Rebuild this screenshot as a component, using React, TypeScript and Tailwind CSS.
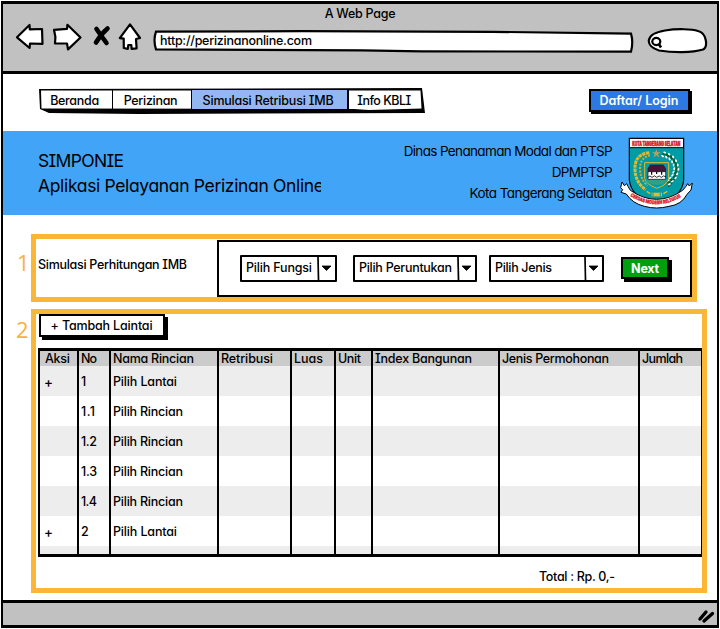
import { useLayoutEffect, useRef, useState } from "react";

const FONT = "font-['Inter','Noto_Sans',sans-serif]";
const FEATURES = "[font-feature-settings:'cv11','cv08','calt'_0]";

/* Single-line label that tracks its letters so the run fills `width` pixels. */
function Label({ text, width, className = "" }: { text: string; width: number; className?: string }) {
  const ref = useRef<HTMLSpanElement>(null);
  const [spacing, setSpacing] = useState(0);
  useLayoutEffect(() => {
    if (ref.current && text.length > 1) {
      const natural = ref.current.getBoundingClientRect().width - spacing * text.length;
      setSpacing((width - natural) / (text.length - 1));
    }
  }, [text, width]);
  return (
    <span ref={ref} className={`inline-block whitespace-pre ${className}`} style={{ letterSpacing: `${spacing}px` }}>
      {text}
    </span>
  );
}

function BrowserIcons() {
  return (
    <svg className="ml-3 mt-4 h-[36px] w-[134px] shrink-0" viewBox="15 20 134 36" fill="white" stroke="black" strokeWidth="2.2" strokeLinejoin="round">
      <path d="M17 37.3 L29.5 25 L29.8 29.3 L42 29 L42.5 43.8 L30 43.5 L29.6 48 Z" />
      <path d="M54 29.8 L67 28.8 L67.4 24.8 L80.5 37.5 L68 49.4 L67 43.5 L55 43.5 L55.4 37 Z" />
      <path d="M96.5 29 Q100 34 106.5 43 M107.5 28.5 Q101 34 96 42.5" fill="none" strokeWidth="4.6" strokeLinecap="round" />
      <path d="M130 24.3 L140 38 L136 39 L136.6 48.4 L131.6 48.9 L131.3 45 L128.3 45 L127.8 48.9 L123.8 48 L123.7 38.6 L119.8 38.2 Z" />
    </svg>
  );
}

function AddressBar() {
  return (
    <div className="relative ml-[3px] mt-[25px] h-[25px] w-[482px] shrink-0">
      <svg className="absolute inset-0 h-full w-full" viewBox="0 0 482 25" fill="white" stroke="black" strokeWidth="2.2">
        <path d="M4 2.6 L150 2.2 L340 2.8 L479 4.6 Q481.5 13 479 22.6 L270 22.4 L210 21.4 L4 20.4 Q1 11 4 2.6 Z" />
      </svg>
      <span className="absolute left-[8px] top-1 text-[12.5px] leading-4">
        <Label text="http://perizinanonline.com" width={152} />
      </span>
    </div>
  );
}

function SearchPill() {
  return (
    <svg className="ml-[13px] mt-[23px] h-[28px] w-[61px] shrink-0" viewBox="647 27 61 28" fill="white" stroke="black" strokeWidth="2.2">
      <path d="M665 30.5 C677 28.5 692 29 698 31 C707 33 708 47 703 49.5 C692 53 672 52.5 659 50.5 C645 46 644 34 665 30.5 Z" />
      <ellipse cx="656.3" cy="41.5" rx="4" ry="3.6" />
      <path d="M658.5 43.5 L661 47.5" strokeWidth="2.6" />
    </svg>
  );
}

const tabs = [
  { text: "Beranda", width: 49, box: "w-[72px]", active: false },
  { text: "Perizinan", width: 54, box: "w-[79px] border-l-[1.5px]", active: false },
  { text: "Simulasi Retribusi IMB", width: 131, box: "w-[156px] border-l-[1.5px]", active: true },
  { text: "Info KBLI", width: 54, box: "w-[75px] border-l-2", active: false },
];

function NavTabs() {
  return (
    <div className="relative flex h-[26px] w-[386px] pt-px">
      <svg className="absolute inset-0 h-full w-full" viewBox="0 0 386 26">
        <path d="M0 1 L383 0 L386 25 L100 26 L10 25 L1 21 Z" fill="black" />
        <path d="M2 2.4 L381.5 2.4 L382.5 20.5 L330 22 L315 21 L2.5 20.5 Z" fill="white" />
      </svg>
      <div className="relative flex pl-px pt-px">
        {tabs.map((t) => (
          <div key={t.text} className={`flex h-[19px] items-center justify-center border-black pr-[3px] pt-[2px] ${t.box} ${t.active ? "bg-[#93b8f1]" : ""}`}>
            <Label text={t.text} width={t.width} className="leading-4" />
          </div>
        ))}
      </div>
    </div>
  );
}

function Emblem() {
  const leaves = [
    [191, 88, 30], [203, 92, 45], [214, 99, 60], [222, 109, 75], [227, 120, 90], [229, 132, 100],
    [226, 144, 115], [222, 155, 130], [214, 164, 145], [206, 172, 160],
  ];
  return (
    <svg className="ml-[6px] mt-[6px] h-[73px] w-[76px]" viewBox="57 36 228 219">
      <path d="M88 40 H251 V165 Q247 218 169 242 Q93 217 88 165 Z" fill="#009ca6" stroke="black" strokeWidth="3.5" />
      <path d="M90 42 H249 V68 H90 Z" fill="white" />
      <path d="M88 68 H251" stroke="black" strokeWidth="3" />
      <text x="97" y="62" fontSize="17" fontWeight="900" fill="#d71920" stroke="#d71920" strokeWidth="1.4" textLength="144" lengthAdjust="spacingAndGlyphs">KOTA TANGERANG SELATAN</text>
      <path d="M169 73 L172 82 L182 82 L174 88 L178 98 L169 91 L160 98 L164 88 L156 82 L166 82 Z" fill="#c59b54" />
      <path d="M148 83 Q103 88 105 133 Q106 172 137 194" fill="none" stroke="#e6b729" strokeWidth="9" strokeDasharray="10 2" />
      <path d="M150 91 Q119 98 120 133 Q121 162 142 182" fill="none" stroke="#d9a928" strokeWidth="6" strokeDasharray="6 4" />
      <path d="M190 86 Q228 91 230 132 Q230 161 205 185" fill="none" stroke="#075f35" strokeWidth="5" />
      {leaves.map(([x, y, r]) => (
        <g key={`${x}-${y}`} transform={`translate(${x} ${y}) rotate(${r})`}>
          <ellipse cx="0" cy="-6" rx="4.5" ry="3" fill="white" />
          <ellipse cx="0" cy="6" rx="4.5" ry="3" fill="white" />
          <rect x="-4" y="-3" width="8" height="6" fill="#075f35" />
        </g>
      ))}
      <path d="M134 113 H206 V160 Q202 180 170 190 Q138 178 134 160 Z" fill="#009ca6" stroke="#e6b729" strokeWidth="3" />
      <path d="M136 163 L204 163 L200 172 Q170 188 140 172 Z" fill="#2fa08a" />
      <path d="M150 120 H190 L197 131 V140 H144 V131 Z" fill="#4a1539" stroke="#2a0a20" strokeWidth="2" />
      <path d="M144 140 H197 V163 H144 Z" fill="white" stroke="black" strokeWidth="2" />
      <path d="M155 140 V149 M170 140 V147 M185 140 V149" stroke="black" strokeWidth="3.5" />
      <path d="M143 157 Q150 149 156 157 Q164 148 170 157 Q178 149 184 157 Q191 149 198 156" fill="none" stroke="black" strokeWidth="2.4" />
      <path d="M155 203 H186 V214 H155 Z" fill="#e6b729" />
      <path d="M159 203 V214 M181 203 V214" stroke="#009ca6" strokeWidth="3" />
      <path d="M140 199 L151 206 M190 206 L202 199" stroke="#e6b729" strokeWidth="4" />
      <path d="M66 171 L73 182 L80 176 L84 184 L91 196 Q170 250 248 196 L258 184 L263 176 L268 183 L277 174 L273 195 L261 208 Q245 239 207 244 Q169 254 133 244 Q97 235 79 207 L63 202 L68 194 L62 188 Z" fill="white" stroke="black" strokeWidth="3" />
      <path id="emblem-ribbon" d="M90 213 Q170 262 249 213" fill="none" />
      <text fontSize="15" fontWeight="900" fill="#d71920" stroke="#d71920" strokeWidth="0.8">
        <textPath href="#emblem-ribbon" textLength="162" lengthAdjust="spacingAndGlyphs">CERDAS MODERN RELIGIUS</textPath>
      </text>
    </svg>
  );
}

function Banner() {
  return (
    <section className="mt-[17px] flex h-[84px] bg-[#42a4f7] font-normal">
      <div className="w-[318px] overflow-hidden pl-[35px] pt-[17px] text-[17.5px] leading-[25px]">
        <div><Label text="SIMPONIE" width={86} /></div>
        <div><Label text="Aplikasi Pelayanan Perizinan Online" width={286} /></div>
      </div>
      <div className="flex w-[292px] flex-col items-end pr-px pt-[10px] text-[13.5px] leading-[21px]">
        <Label text="Dinas Penanaman Modal dan PTSP" width={209} />
        <Label text="DPMPTSP" width={61} />
        <Label text="Kota Tangerang Selatan" width={143} />
      </div>
      <Emblem />
    </section>
  );
}

function Combo({ text, width, box }: { text: string; width: number; box: string }) {
  return (
    <div className={`flex h-[27px] rounded-[1px] border-2 border-black ${box}`}>
      <div className="min-w-0 grow pl-1 pt-[2px]">
        <Label text={text} width={width} className="leading-4" />
      </div>
      <svg className="h-[23px] w-[18px] shrink-0" viewBox="0 0 18 23">
        <path d="M1 0 L1.5 23" stroke="black" strokeWidth="1.7" />
        <path d="M5 9 H14 L9.5 13.5 Z" stroke="black" strokeWidth="0.8" />
      </svg>
    </div>
  );
}

const columns = [
  { text: "Aksi", width: 25, box: "w-[38px] pl-[5px]" },
  { text: "No", width: 16, box: "w-[32px] pl-[3px]" },
  { text: "Nama Rincian", width: 81, box: "w-[108px] pl-[3px]" },
  { text: "Retribusi", width: 52, box: "w-[73px] pl-[3px]" },
  { text: "Luas", width: 29, box: "w-[44px] pl-[3px]" },
  { text: "Unit", width: 23, box: "w-[37px] pl-[3px]" },
  { text: "Index Bangunan", width: 97, box: "w-[127px] pl-[3px]" },
  { text: "Jenis Permohonan", width: 107, box: "w-[140px] pl-[3px]" },
  { text: "Jumlah", width: 41, box: "w-[62px] pl-[3px]" },
];

const rows = [
  { mark: "+", no: "1", noWidth: 6, name: "Pilih Lantai", nameWidth: 64 },
  { mark: "", no: "1.1", noWidth: 14, name: "Pilih Rincian", nameWidth: 70 },
  { mark: "", no: "1.2", noWidth: 16, name: "Pilih Rincian", nameWidth: 70 },
  { mark: "", no: "1.3", noWidth: 16, name: "Pilih Rincian", nameWidth: 70 },
  { mark: "", no: "1.4", noWidth: 16, name: "Pilih Rincian", nameWidth: 70 },
  { mark: "+", no: "2", noWidth: 7, name: "Pilih Lantai", nameWidth: 64 },
];

function DetailTable() {
  return (
    <div className="relative ml-[2px] h-[209px] w-[664px] border-2 border-t-[3px] border-b-[3px] border-black border-r-[1px]">
      <div className="flex h-[15px] bg-[#cbcbcb] leading-4">
        {columns.map((c) => (
          <div key={c.text} className={`shrink-0 ${c.box}`}><Label text={c.text} width={c.width} /></div>
        ))}
      </div>
      {rows.map((r, i) => (
        <div key={i} className={`flex h-[30px] items-center pt-[2px] ${i % 2 === 0 ? "bg-[#ededed]" : "bg-white"}`}>
          <div className="w-[38px] pl-1 text-[13.5px] leading-4">{r.mark}</div>
          <div className="w-[32px] pl-[3px]"><Label text={r.no} width={r.noWidth} /></div>
          <div className="w-[108px] pl-[3px]"><Label text={r.name} width={r.nameWidth} /></div>
        </div>
      ))}
      <div className="h-[8px] bg-[#ededed]" />
      {/* Continuous column rules drawn over the striped rows */}
      <div className="pointer-events-none absolute inset-0 flex">
        {columns.slice(0, -1).map((c) => (
          <div key={c.text} className={`relative shrink-0 ${c.box}`}>
            <div className="absolute inset-y-0 right-0 w-[2px] translate-x-px bg-black" />
          </div>
        ))}
      </div>
    </div>
  );
}

export default function App() {
  return (
    <div className={`h-[629px] w-[720px] overflow-hidden bg-white pt-px pl-px text-[12.5px] font-[450] text-black ${FONT} ${FEATURES}`}>
      <div className="flex h-[627px] w-[718px] flex-col border-x-2 border-t-[3px] border-b-[3px] border-black">
        <header className="h-[70px] shrink-0 border-b-[3px] border-black bg-[#c1c1c1]">
          <div className="h-0 text-center leading-5"><Label text="A Web Page" width={71} /></div>
          <div className="flex items-start">
            <BrowserIcons />
            <AddressBar />
            <SearchPill />
          </div>
        </header>

        <main className="flex h-[526px] shrink-0 flex-col">
          <div className="flex pl-9 pt-[14px]">
            <NavTabs />
            <div className="ml-[164px] mt-px h-[23px] w-[101px] border-2 border-black bg-[#2c78e4] pr-px text-center font-semibold leading-[20px] text-white shadow-[2px_2px_0_black]">
              <Label text="Daftar/ Login" width={79} />
            </div>
          </div>
          <Banner />

          <div className="mt-[19px] flex">
            <div className="w-7 pl-[14px] pt-[14px] font-['Open_Sans',sans-serif] text-[22px] font-normal leading-[28px] text-[#fbb040]">1</div>
            <section className="flex h-[68px] w-[666px] border-[5px] border-[#fbb636]">
              <div className="w-[181px] pl-[2px] pt-[17px]"><Label text="Simulasi Perhitungan IMB" width={149} /></div>
              <div className="mt-px flex h-[57px] w-[475px] border-2 border-black pl-[21px] pt-[13px]">
                <Combo text="Pilih Fungsi" width={66} box="w-[97px]" />
                <Combo text="Pilih Peruntukan" width={93} box="ml-4 w-[124px]" />
                <Combo text="Pilih Jenis" width={57} box="ml-3 w-[115px]" />
                <div className="ml-[17px] mt-[2px] h-[22px] w-[48px] border-2 border-black bg-[#009f0f] text-center font-bold leading-[19px] text-white shadow-[3px_3px_0_black]">
                  <Label text="Next" width={28} />
                </div>
              </div>
            </section>
          </div>

          <div className="mt-[7px] flex">
            <div className="w-7 pl-[13px] pt-[6px] font-['Open_Sans',sans-serif] text-[22px] font-normal leading-[28px] text-[#fbb040]">2</div>
            <section className="h-[284px] w-[676px] border-[5px] border-[#fbb636]">
              <div className="ml-[3px] h-[23px] w-[126px] border-2 border-black pr-px text-center leading-[19px] shadow-[3px_3px_0_black]">
                <Label text="+ Tambah Laintai" width={102} />
              </div>
              <div className="mt-[11px]"><DetailTable /></div>
              <div className="pl-[503px] pt-[11px]"><Label text="Total : Rp. 0,-" width={76} /></div>
            </section>
          </div>
        </main>

        <footer className="flex grow items-end justify-end border-t-[3px] border-black bg-[#c1c1c1]">
          <svg className="mb-px mr-[2px] h-[15px] w-[18px]" viewBox="697 609 18 15" stroke="black" strokeWidth="3.4" strokeLinecap="round">
            <path d="M700 619 L706 612 M704 621 L712.5 613.5" />
          </svg>
        </footer>
      </div>
    </div>
  );
}
